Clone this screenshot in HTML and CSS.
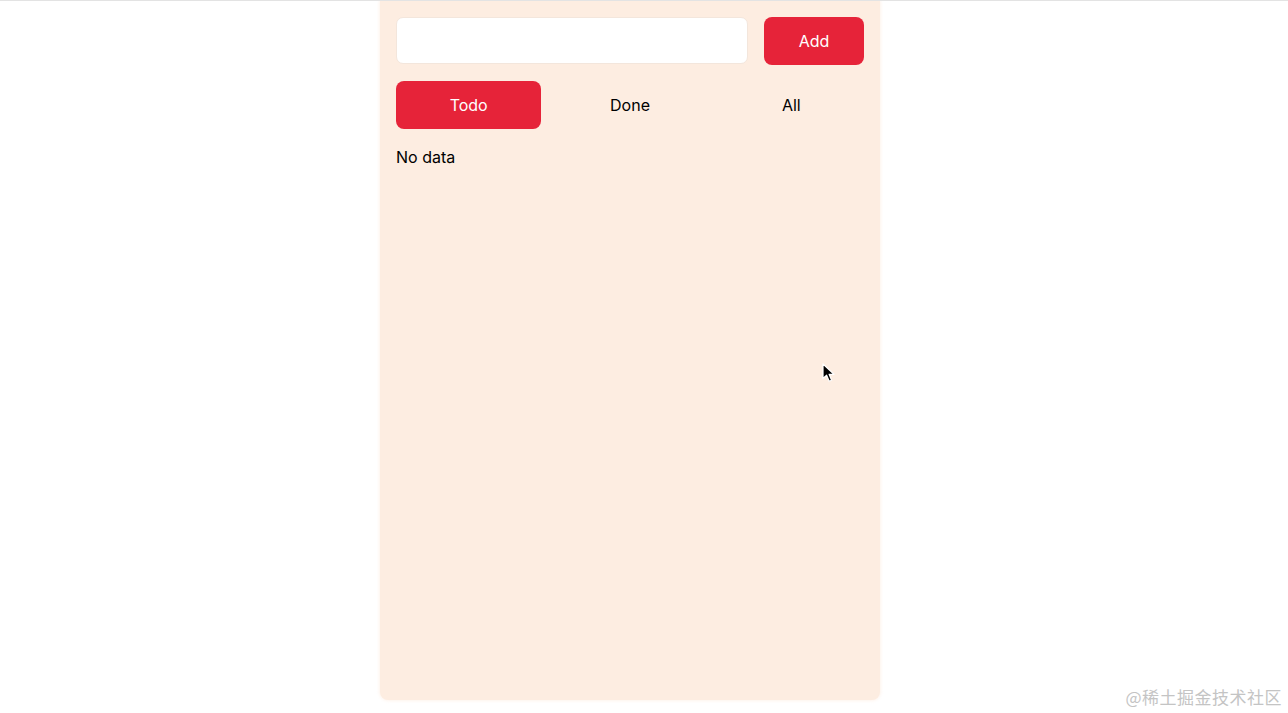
FILE: index.html
```html
<!DOCTYPE html>
<html lang="en">
<head>
<meta charset="utf-8">
<title>Todo</title>
<link rel="stylesheet" href="styles.css">
</head>
<body>
<div class="page">
  <main class="panel">
    <div class="add-row">
      <input class="todo-input" type="text" aria-label="New todo">
      <button class="btn btn-add">Add</button>
    </div>
    <div class="tabs">
      <button class="tab tab-active">Todo</button>
      <button class="tab">Done</button>
      <button class="tab">All</button>
    </div>
    <p class="empty">No data</p>
  </main>
</div>
<svg class="cursor" width="14" height="20" viewBox="0 0 14 20">
  <path d="M1 1 L1 15.5 L4.6 12.2 L7.2 18.2 L9.6 17.2 L7.1 11.3 L12 11.3 Z" fill="#000" stroke="#fff" stroke-width="1.2" stroke-linejoin="round"/>
</svg>
<div class="watermark">@稀土掘金技术社区</div>
</body>
</html>
```

FILE: styles.css
```css
html, body {
  margin: 0;
  padding: 0;
  background: #ffffff;
  font-family: Inter, "Noto Sans", "Liberation Sans", sans-serif;
}
body {
  border-top: 1px solid #e3e3e3;
  height: 712px;
  overflow: hidden;
  position: relative;
}
.page {
  box-sizing: border-box;
  display: flex;
  justify-content: center;
  padding-right: 28px;
}
.panel {
  box-sizing: border-box;
  width: 500px;
  height: 699px;
  padding: 16px;
  background: #fdede1;
  border-radius: 0 0 8px 8px;
  box-shadow: 0 0 3px 1px rgba(253, 237, 225, 0.6);
  display: flex;
  flex-direction: column;
}
.add-row {
  display: flex;
  gap: 16px;
  height: 48px;
}
.todo-input {
  flex: 1;
  box-sizing: border-box;
  height: 47px;
  margin: 0;
  border: 1px solid #f3e6dc;
  border-radius: 7px;
  background: #ffffff;
  font: inherit;
  font-size: 16px;
  padding: 0 12px;
  outline: none;
}
.btn, .tab {
  font-family: inherit;
  font-size: 16px;
  border: none;
  margin: 0;
  cursor: pointer;
}
.btn-add {
  width: 100px;
  height: 48px;
  background: #e62339;
  color: #ffffff;
  border-radius: 8px;
}
.tabs {
  margin-top: 16px;
  display: grid;
  grid-template-columns: repeat(3, 1fr);
  gap: 16px;
  height: 48px;
}
.tab {
  background: transparent;
  color: #000000;
  border-radius: 8px;
}
.tab-active {
  background: #e62339;
  color: #ffffff;
}
.empty {
  margin: 19px 0 0;
  font-size: 16px;
  line-height: 19px;
  color: #000000;
}
.cursor {
  position: absolute;
  left: 822px;
  top: 362px;
}
.watermark {
  position: absolute;
  right: 6px;
  bottom: 4px;
  font-family: "Noto Sans CJK SC", sans-serif;
  font-size: 17px;
  color: #c4c4c4;
  letter-spacing: 0.5px;
}
```
